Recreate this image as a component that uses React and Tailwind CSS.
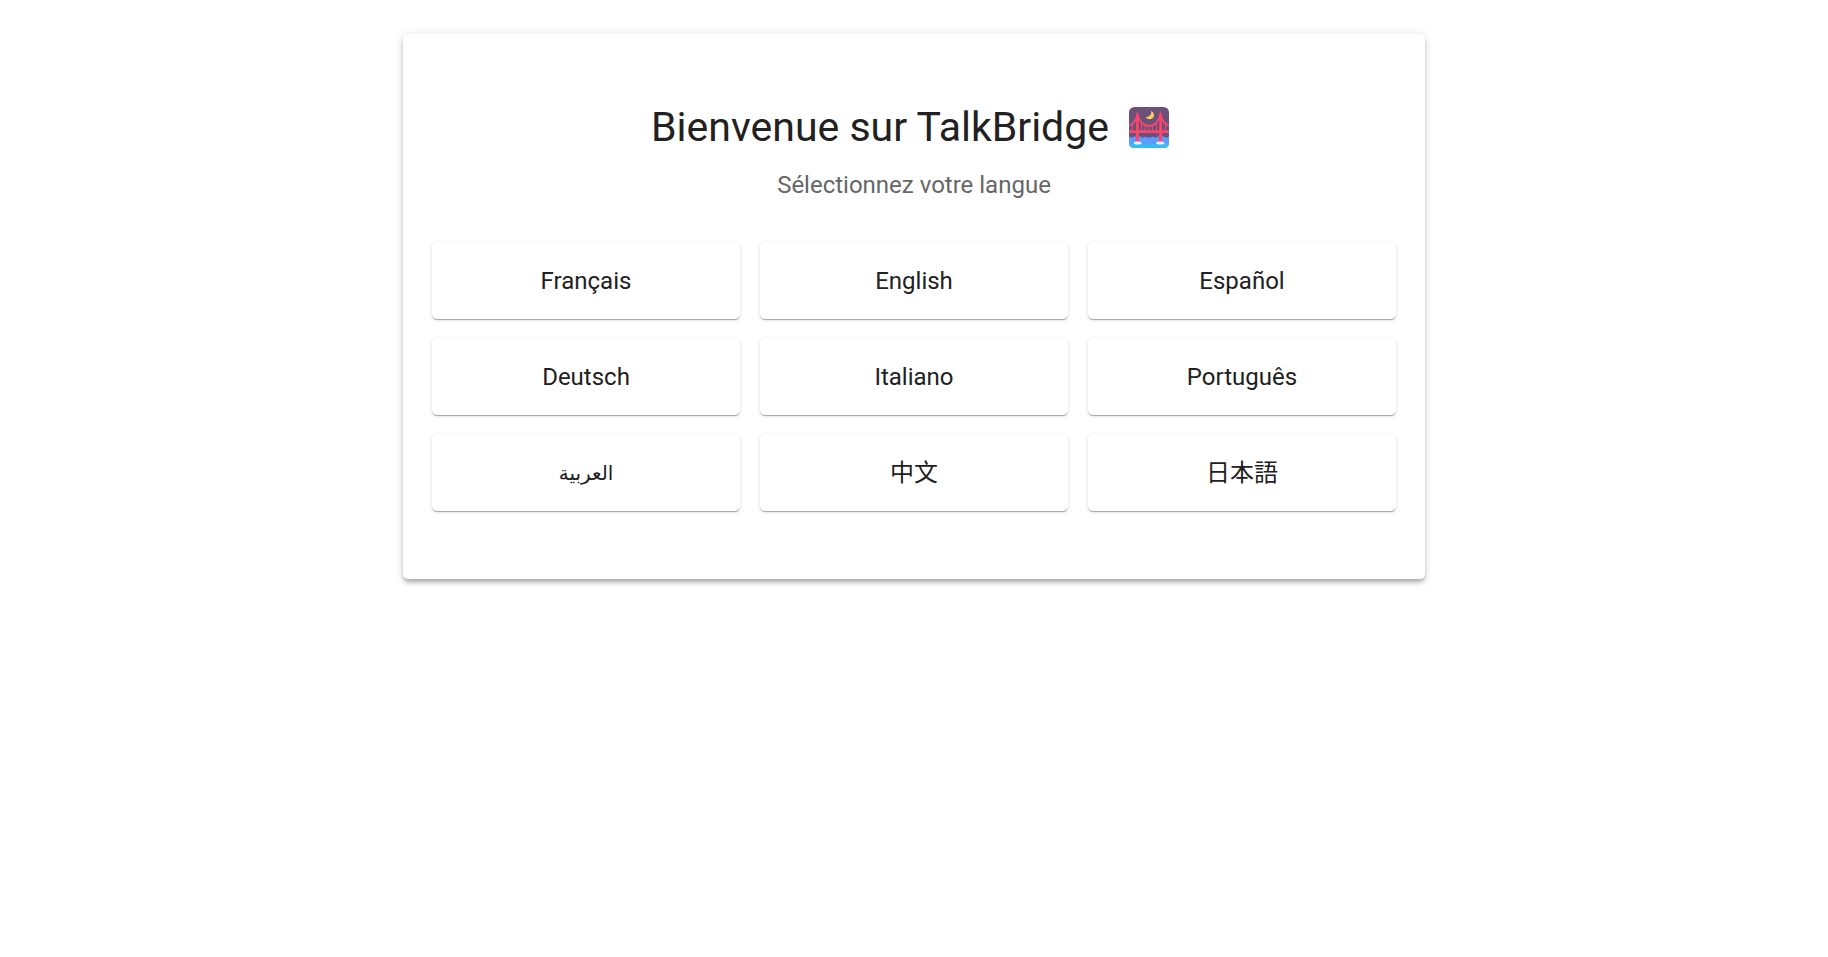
const languages = [
  { code: "fr", name: "Français" },
  { code: "en", name: "English" },
  { code: "es", name: "Español" },
  { code: "de", name: "Deutsch" },
  { code: "it", name: "Italiano" },
  { code: "pt", name: "Português" },
  { code: "ar", name: "العربية", style: "text-xl font-['Roboto','DejaVu_Sans',sans-serif]" },
  { code: "zh", name: "中文", style: "text-2xl font-['Roboto','Noto_Sans_CJK_SC',sans-serif]" },
  { code: "ja", name: "日本語", style: "text-2xl font-['Roboto','Noto_Sans_CJK_JP',sans-serif]" },
];

function BridgeAtNight() {
  return (
    <svg viewBox="0 0 40 41" className="h-[41px] w-10 shrink-0" role="img" aria-label="Pont de nuit">
      <defs>
        <clipPath id="frame">
          <rect width="40" height="41" rx="5.5" />
        </clipPath>
      </defs>
      <g clipPath="url(#frame)">
        <rect width="40" height="41" fill="#6d5078" />
        <path d="M0 29.500c1.500 1.200 3.500 1.200 5 0h6c1.500 1.500 4 1.500 5.500 0 1.500 1.500 5 1.500 7 0 1.500 1.500 4 1.500 5.500 0h6c1.500 1.200 3.500 1.200 5 0V41H0z" fill="#5a9bfb" />
        <path d="M0 36c4 0 5 1.500 9 1.500s7-.500 11-.500 7 .500 11 .500 5-1.500 9-1.500v5H0z" fill="#35bdf0" />
        <path d="M22.200 3.800C26.800 6.500 25.300 12.300 20.600 12.300C18.600 12.300 17.200 11.300 16.600 10.100C20.600 10.200 22.700 7.600 22.200 3.800z" fill="#fcd15a" />
        <g fill="none" stroke="#f8476f">
          <path d="M0 18.500C4.500 17.500 7 13.500 8.400 7.500C10.500 14.500 14 19 20 19S29.500 14.500 31.600 7.500C33 13.500 35.500 17.500 40 18.500" strokeWidth="1.800" />
          <path d="M3.500 17v8M12.500 15v10M16.300 18v7M20 19v6M23.700 18v7M27.500 15v10M36.500 17v8" strokeWidth="1" />
        </g>
        <path d="M0 23.200H40V26H0zM7.200 7.500a1.200 1.200 0 0 1 2.400 0L10.100 36H6.700zM30.400 7.500a1.200 1.200 0 0 1 2.400 0L33.300 36H29.900z" fill="#f8476f" />
        <path d="M4.800 36c0-1 1.500-1.500 3.800-1.500s4.200.500 4.200 1.500-1.500 1.500-4 1.500-4-.500-4-1.500zM27 36c0-1 1.500-1.500 4-1.500s4.500.500 4.500 1.500-1.500 1.500-4 1.500-4.500-.500-4.500-1.500z" fill="#e8eef8" />
      </g>
    </svg>
  );
}

export default function App() {
  return (
    <main className="min-h-screen bg-white px-7 py-[34px] font-['Roboto','Liberation_Sans',sans-serif] text-[#212121]">
      <section className="mx-auto max-w-[1022px] rounded-[5px] bg-white px-[29px] py-[68px] shadow-[0_4px_4px_-2px_rgba(0,0,0,0.2),0_4px_5px_0_rgba(0,0,0,0.14),0_1px_10px_0_rgba(0,0,0,0.12)]">
        <h1 className="mb-[14px] flex flex-wrap items-center justify-center gap-5 pr-2 text-center text-[41px] leading-[50px]">
          Bienvenue sur TalkBridge
          <BridgeAtNight />
        </h1>
        <p className="mb-[38px] text-center text-2xl leading-[38px] text-[#666666]">
          Sélectionnez votre langue
        </p>
        <div className="grid grid-cols-1 gap-x-5 gap-y-[19px] sm:grid-cols-2 md:grid-cols-3">
          {languages.map(({ code, name, style }) => (
            <button
              key={code}
              type="button"
              lang={code}
              className={`h-[77px] cursor-pointer rounded-[5px] bg-white shadow-[0_2px_1px_-1px_rgba(0,0,0,0.2),0_1px_1px_0_rgba(0,0,0,0.14),0_1px_4px_0_rgba(0,0,0,0.12)] ${style ?? "text-2xl"}`}
            >
              {name}
            </button>
          ))}
        </div>
      </section>
    </main>
  );
}
